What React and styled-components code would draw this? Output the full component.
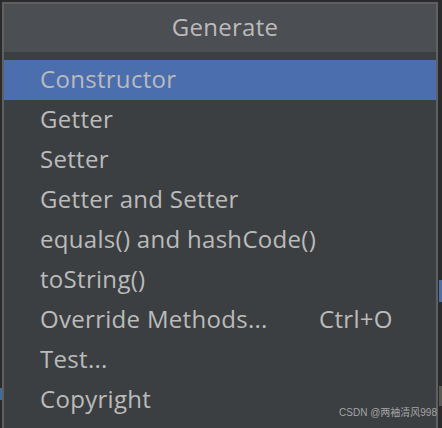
import styled, { createGlobalStyle } from "styled-components";

const Global = createGlobalStyle`
  html, body {
    margin: 0;
    padding: 0;
    background: #2b2b2b;
    height: 100%;
    overflow: hidden;
  }
  #root {
    height: 100%;
  }
`;

const Screen = styled.div`
  position: relative;
  height: 428px;
  width: 442px;
  padding: 2px 4px 0 2px;
  box-sizing: border-box;
  background: #2b2b2b;
`;

const Popup = styled.div`
  height: 100%;
  border: 2px solid #5e6062;
  border-bottom: none;
  background: #3c3f41;
  box-sizing: border-box;
  font-family: "Open Sans", "Noto Sans", sans-serif;
  color: #bbbbbb;
  letter-spacing: 0.3px;
`;

const Header = styled.div`
  height: 48px;
  background: #4b4e52;
  display: flex;
  align-items: center;
  justify-content: center;
  font-size: 24px;
  padding: 0 0 3px 10px;
  box-sizing: border-box;
  margin-bottom: 8px;
`;

const Row = styled.div`
  height: 40px;
  display: flex;
  align-items: center;
  padding-left: 36px;
  padding-bottom: 3px;
  box-sizing: border-box;
  font-size: 24px;
  background: ${(p) => (p.$active ? "#4b6eaf" : "transparent")};
`;

const Label = styled.span`
  width: 279px;
`;

const Shortcut = styled.span``;

// 바깥 IDE 조각들
const EdgeMark = styled.div`
  position: absolute;
  width: 3px;
  background: ${(p) => p.$color};
`;

const Watermark = styled.div`
  position: absolute;
  right: 5px;
  bottom: 9px;
  font-family: "Liberation Sans", "Noto Sans CJK SC", sans-serif;
  font-size: 10px;
  color: rgba(200, 200, 200, 0.75);
`;

const items = [
  { label: "Constructor", active: true },
  { label: "Getter" },
  { label: "Setter" },
  { label: "Getter and Setter" },
  { label: "equals() and hashCode()" },
  { label: "toString()" },
  { label: "Override Methods...", shortcut: "Ctrl+O" },
  { label: "Test..." },
  { label: "Copyright" },
];

export default function App() {
  return (
    <>
      <Global />
      <Screen>
        <Popup>
          <Header>Generate</Header>
          {items.map((it) => (
            <Row key={it.label} $active={it.active}>
              <Label>{it.label}</Label>
              {it.shortcut && <Shortcut>{it.shortcut}</Shortcut>}
            </Row>
          ))}
        </Popup>
        <EdgeMark $color="#4b6eaf" style={{ right: 0, top: 280, height: 22 }} />
        <EdgeMark $color="#5a5a50" style={{ right: 0, top: 386, height: 20 }} />
        <EdgeMark $color="#3d6e99" style={{ left: 0, top: 388, height: 12, width: 2 }} />
        <Watermark>CSDN @两袖清风998</Watermark>
      </Screen>
    </>
  );
}
